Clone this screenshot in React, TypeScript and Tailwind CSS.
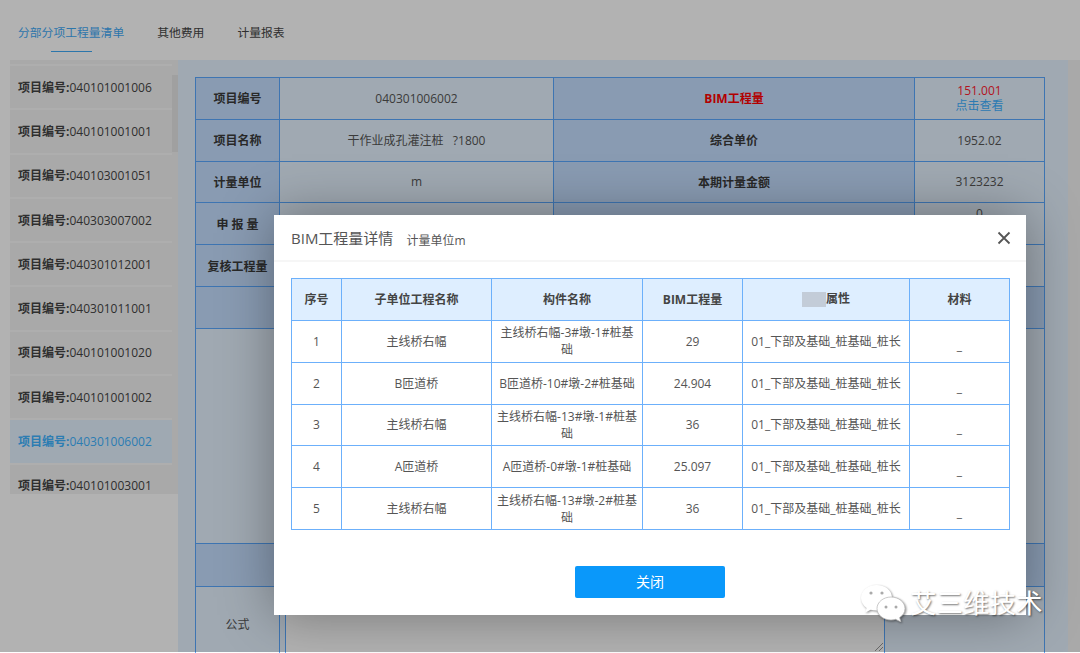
import React from "react";

const font = { fontFamily: '"Open Sans","Noto Sans CJK SC",sans-serif' };

const items = [
  "040101001006",
  "040101001001",
  "040103001051",
  "040303007002",
  "040301012001",
  "040301011001",
  "040101001020",
  "040101001002",
  "040301006002",
  "040101003001",
];

const rows = [
  ["1", "主线桥右幅", "主线桥右幅-3#墩-1#桩基础", "29"],
  ["2", "B匝道桥", "B匝道桥-10#墩-2#桩基础", "24.904"],
  ["3", "主线桥右幅", "主线桥右幅-13#墩-1#桩基础", "36"],
  ["4", "A匝道桥", "A匝道桥-0#墩-1#桩基础", "25.097"],
  ["5", "主线桥右幅", "主线桥右幅-13#墩-2#桩基础", "36"],
];

const lab = "border border-[#5aa8ff] bg-[#c5dfff] text-center text-xs font-bold text-[#3a3a3a]";
const val = "border border-[#5aa8ff] text-center text-xs text-[#555]";
const mh = "border border-[#6cb0fb] bg-[#deeeff] text-center text-xs font-bold text-[#444]";
const mc = "border border-[#6cb0fb] px-[5px] text-center text-xs leading-[17px] text-[#555]";

function WeChat() {
  return (
    <svg width="46" height="38" viewBox="0 0 46 38" className="drop-shadow-[1px_1px_1px_rgba(0,0,0,0.45)]">
      <path d="M16.500 1C7.900 1 1 6.800 1 14c0 4 2.200 7.600 5.600 10l-1.300 4.600 5.400-2.800c1.800.5 3.800.8 5.800.8 8.600 0 15.500-5.800 15.500-13S25.100 1 16.500 1Z" fill="#fff" />
      <path d="M31 13c-7.700 0-14 5.200-14 11.500S23.300 36 31 36c1.600 0 3.200-.2 4.600-.7l5.200 2.500-1.200-4.200c3.200-2.100 5.400-5.200 5.400-9.100C45 18.200 38.700 13 31 13Z" fill="#fff" stroke="#bbb" strokeWidth="0.8" />
      <circle cx="11" cy="9" r="1.600" fill="#aaa" />
      <circle cx="22" cy="9" r="1.600" fill="#aaa" />
      <circle cx="26" cy="23" r="1.500" fill="#aaa" />
      <circle cx="36" cy="23" r="1.500" fill="#aaa" />
    </svg>
  );
}

export default function App() {
  return (
    <div style={font} className="relative h-[653px] w-[1080px] overflow-hidden bg-white">
      <div className="flex h-[60px] items-start gap-[33px] pl-[18px] pt-[24px] text-[11.800px] text-[#444]">
        <div className="relative text-[#3fa9f5]">
          分部分项工程量清单
          <div className="absolute left-[33px] top-[27px] h-[1px] w-[41px] bg-[#3fa9f5]" />
        </div>
        <div>其他费用</div>
        <div>计量报表</div>
      </div>

      <div className="flex h-[592px]">
        <div className="w-[178px] pl-[10px]">
          <div className="flex h-[434px] overflow-hidden bg-[#f3f3f3]">
            <div className="w-[162px] pt-[4px]">
              {items.map((it, i) => (
                <div
                  key={it}
                  className={`flex h-[44.300px] items-center border-t-2 border-[#fafafa] pl-2 pt-[1px] text-xs ${
                    i === 8 ? "bg-[#e4f2ff] text-[#3fb4ff]" : "text-[#444]"
                  }`}
                >
                  <b>项目编号:</b>
                  <span>{it}</span>
                </div>
              ))}
            </div>
            <div className="w-[6px] pt-[15px]">
              <div className="h-[77px] bg-[#e6e6e6]" />
            </div>
          </div>
        </div>

        <div className="w-[890px] bg-[#e5f3ff] pl-[17px] pt-[17px]">
          <table className="w-[849px] table-fixed border-collapse">
            <colgroup>
              <col className="w-[84px]" />
              <col className="w-[274px]" />
              <col className="w-[361px]" />
              <col className="w-[130px]" />
            </colgroup>
            <tbody>
              <tr className="h-[42px]">
                <td className={lab}>项目编号</td>
                <td className={val}>040301006002</td>
                <td className={`${lab} !text-[#ff0000]`}>BIM工程量</td>
                <td className={`${val} pb-[1px]`}>
                  <div className="leading-[15.500px] text-[#ff2030]">151.001</div>
                  <div className="leading-[15.500px] text-[#3fb0ff]">点击查看</div>
                </td>
              </tr>
              <tr className="h-[42px]">
                <td className={lab}>项目名称</td>
                <td className={val}>干作业成孔灌注桩&nbsp;&nbsp;&nbsp;?1800</td>
                <td className={lab}>综合单价</td>
                <td className={val}>1952.02</td>
              </tr>
              <tr className="h-[41px]">
                <td className={`${lab} pt-[1px]`}>计量单位</td>
                <td className={val}>m</td>
                <td className={`${lab} pt-[1px]`}>本期计量金额</td>
                <td className={val}>3123232</td>
              </tr>
              <tr className="h-[42px]">
                <td className={`${lab} pt-[2px]`}>申 报 量</td>
                <td className={val} />
                <td className={lab} />
                <td className={`${val} pb-[20px]`}>0</td>
              </tr>
              <tr className="h-[42px]">
                <td className={`${lab} pt-[2px]`}>复核工程量</td>
                <td className={val} />
                <td className={lab} />
                <td className={val} />
              </tr>
              <tr className="h-[42px]">
                <td colSpan={4} className={lab} />
              </tr>
              <tr className="h-[215px]">
                <td colSpan={4} className={val} />
              </tr>
              <tr className="h-[43px]">
                <td colSpan={4} className={lab} />
              </tr>
              <tr className="h-[90px]">
                <td className={`${val} pb-[14px]`}>公式</td>
                <td colSpan={3} className="border border-[#5aa8ff] pl-[5px] pr-[159px] pt-[2px] align-top">
                  <div className="relative h-[84px] border border-[#5aa8ff] bg-white">
                    <svg width="10" height="10" viewBox="0 0 10 10" className="absolute bottom-[20px] right-0">
                      <path d="M1 9 9 1M5 9l4-4" stroke="#999" fill="none" />
                    </svg>
                  </div>
                </td>
              </tr>
            </tbody>
          </table>
        </div>
        <div className="flex-1 bg-[#f3f3f3]" />
      </div>

      <div className="absolute inset-x-0 bottom-[1px] top-0 bg-black/30" />

      <div className="absolute left-[274px] top-[215px] h-[400px] w-[752px] bg-white shadow-[0_0_50px_rgba(0,0,0,0.35)]">
        <div className="flex h-[47px] items-center border-b-2 border-[#f6f6f6] pl-[17px] pr-[15px] text-[#555]">
          <span className="mt-[2px] text-[15px]">BIM工程量详情</span>
          <span className="ml-[13px] mt-[6px] text-xs">计量单位m</span>
          <svg width="14" height="14" viewBox="0 0 14 14" className="ml-auto">
            <path d="M1.500 1.500 12.500 12.500M12.500 1.500 1.500 12.500" stroke="#555" strokeWidth="1.800" />
          </svg>
        </div>

        <div className="pl-[17px] pt-[16px]">
          <table className="w-[718px] table-fixed border-collapse">
            <colgroup>
              <col className="w-[50px]" />
              <col className="w-[150px]" />
              <col className="w-[151px]" />
              <col className="w-[100px]" />
              <col className="w-[167px]" />
              <col className="w-[100px]" />
            </colgroup>
            <thead>
              <tr className="h-[42px]">
                <th className={mh}>序号</th>
                <th className={mh}>子单位工程名称</th>
                <th className={mh}>构件名称</th>
                <th className={mh}>BIM工程量</th>
                <th className={`${mh} pt-[3px]`}>
                  <span className="inline-flex items-center justify-center">
                    <span className="h-[15px] w-[24px] bg-[#c3ccd8]" />
                    属性
                  </span>
                </th>
                <th className={mh}>材料</th>
              </tr>
            </thead>
            <tbody>
              {rows.map((r) => (
                <tr key={r[0]} className="h-[41.800px]">
                  <td className={mc}>{r[0]}</td>
                  <td className={mc}>{r[1]}</td>
                  <td className={mc}>{r[2]}</td>
                  <td className={mc}>{r[3]}</td>
                  <td className={`${mc} whitespace-nowrap`}>01_下部及基础_桩基础_桩长</td>
                  <td className={`${mc} pt-[8px]`}>_</td>
                </tr>
              ))}
            </tbody>
          </table>
        </div>

        <div className="flex justify-center pt-[36px]">
          <button className="h-[32px] w-[150px] rounded-[2px] bg-[#0a98fa] text-sm text-white">关闭</button>
        </div>
      </div>

      <div className="absolute left-[860px] top-[584px] flex items-center gap-[4px]">
        <WeChat />
        <span className="text-[26.500px] leading-none text-white [text-shadow:1px_1px_2px_rgba(0,0,0,0.55)]">艾三维技术</span>
      </div>
    </div>
  );
}
